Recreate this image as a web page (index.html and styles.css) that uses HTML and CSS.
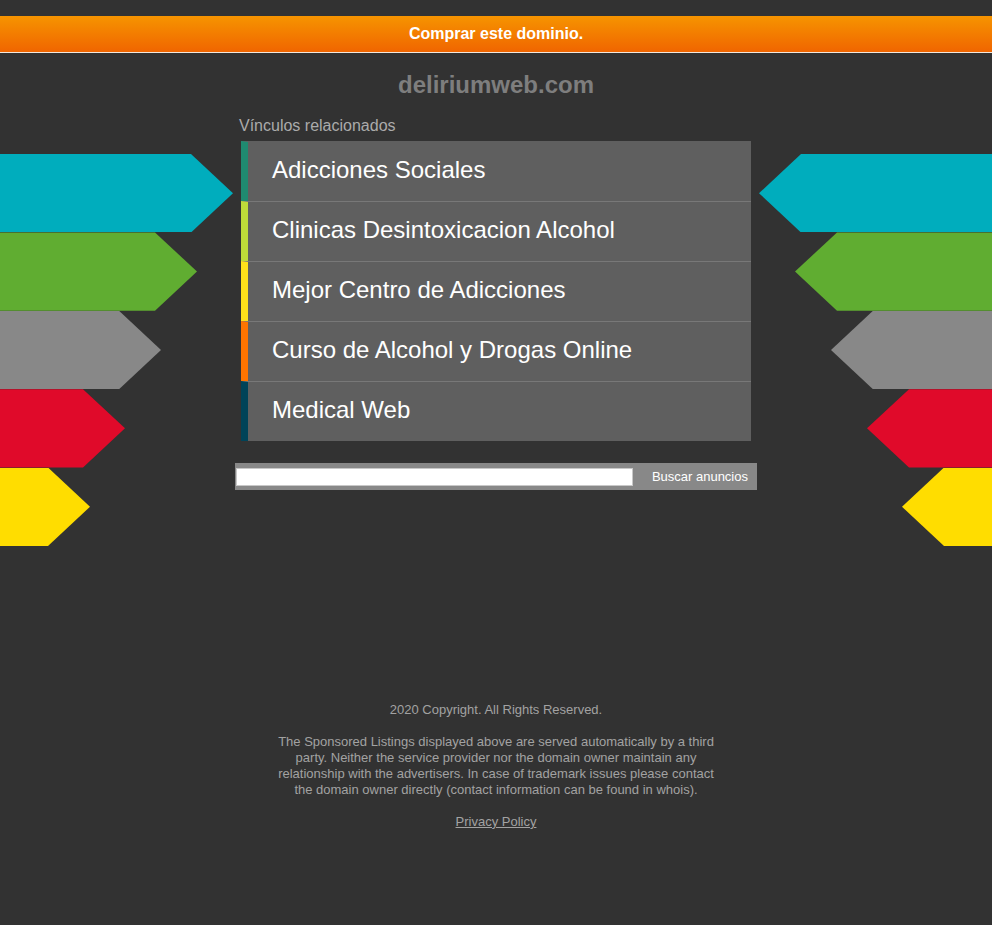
FILE: index.html
```html
<!DOCTYPE html>
<html lang="es">
<head>
<meta charset="utf-8">
<title>deliriumweb.com</title>
<link rel="stylesheet" href="styles.css">
</head>
<body>
<div class="buy-bar"><a href="#">Comprar este dominio.</a></div>
<h1 class="domain">deliriumweb.com</h1>
<main class="layout">
  <div class="arrows arrows-left">
    <div class="arrow arrow-l a1"></div>
    <div class="arrow arrow-l a2"></div>
    <div class="arrow arrow-l a3"></div>
    <div class="arrow arrow-l a4"></div>
    <div class="arrow arrow-l a5"></div>
  </div>
  <div class="center">
    <div class="related-title">Vínculos relacionados</div>
    <ul class="links">
      <li class="link c1"><a href="#">Adicciones Sociales</a></li>
      <li class="link c2"><a href="#">Clinicas Desintoxicacion Alcohol</a></li>
      <li class="link c3"><a href="#">Mejor Centro de Adicciones</a></li>
      <li class="link c4"><a href="#">Curso de Alcohol y Drogas Online</a></li>
      <li class="link c5"><a href="#">Medical Web</a></li>
    </ul>
    <form class="search">
      <input class="search-input" type="text">
      <button class="search-btn" type="button">Buscar anuncios</button>
    </form>
  </div>
  <div class="arrows arrows-right">
    <div class="arrow arrow-r a1"></div>
    <div class="arrow arrow-r a2"></div>
    <div class="arrow arrow-r a3"></div>
    <div class="arrow arrow-r a4"></div>
    <div class="arrow arrow-r a5"></div>
  </div>
</main>
<footer class="footer">
  <p class="copy">2020 Copyright. All Rights Reserved.</p>
  <p class="disclaimer">The Sponsored Listings displayed above are served automatically by a third party. Neither the service provider nor the domain owner maintain any relationship with the advertisers. In case of trademark issues please contact the domain owner directly (contact information can be found in whois).</p>
  <p class="privacy"><a href="#">Privacy Policy</a></p>
</footer>
</body>
</html>
```
FILE: styles.css
```css
* { box-sizing: border-box; }
html, body {
  margin: 0;
  padding: 0;
  background: #323232;
  font-family: "Liberation Sans", Arial, sans-serif;
}
body { min-height: 925px; }

.buy-bar {
  margin-top: 16px;
  height: 37px;
  background: linear-gradient(to bottom, #f69400, #f06500);
  border-bottom: 1px solid #f3e7dc;
  text-align: center;
}
.buy-bar a {
  display: block;
  line-height: 35px;
  color: #fff;
  font-weight: bold;
  font-size: 16px;
  text-decoration: none;
}

.domain {
  margin: 18px 0 0;
  height: 28px;
  line-height: 28px;
  text-align: center;
  font-size: 24px;
  font-weight: bold;
  color: #7e7e7e;
}

.layout {
  display: grid;
  grid-template-columns: 235px 522px 235px;
}

.arrows {
  padding-top: 55px;
  display: flex;
  flex-direction: column;
}
.arrow { height: 78.4px; }
.arrow-l {
  clip-path: polygon(0 0, calc(100% - 42px) 0, 100% 50%, calc(100% - 42px) 100%, 0 100%);
}
.arrow-r {
  align-self: flex-end;
  clip-path: polygon(42px 0, 100% 0, 100% 100%, 42px 100%, 0 50%);
}
.a1 { width: 233px; background: #00adbd; }
.a2 { width: 197px; background: #60ad31; }
.a3 { width: 161px; background: #888888; }
.a4 { width: 125px; background: #e00a2a; }
.a5 { width: 90px;  background: #ffdd00; }

.center { padding-top: 17px; }
.related-title {
  padding-left: 4px;
  font-size: 16px;
  line-height: 20px;
  color: #ababab;
}
.links {
  list-style: none;
  margin: 5px 0 0 6px;
  padding: 0;
  width: 510px;
}
.link {
  height: 60px;
  display: flex;
  align-items: center;
  padding-bottom: 3px;
  background: #5f5f5f;
  border-left: 7px solid #1f8a70;
  border-top: 1px solid #787878;
}
.link:first-child { border-top-color: #5f5f5f; }
.link a {
  padding-left: 24px;
  color: #fff;
  font-size: 24px;
  text-decoration: none;
}
.c1 { border-left-color: #1f8a70; }
.c2 { border-left-color: #bedb39; }
.c3 { border-left-color: #ffe11a; }
.c4 { border-left-color: #fd7400; }
.c5 { border-left-color: #004358; }

.search {
  margin: 22px 0 0;
  height: 27px;
  background: #888888;
  display: flex;
  align-items: flex-start;
  padding: 5px 0 0 1px;
}
.search-input {
  width: 397px;
  height: 18px;
  margin: 0;
  padding: 0;
  border: 1px solid #c8c8c8;
  background: #fff;
}
.search-btn {
  flex: 1;
  height: 18px;
  margin: 0;
  padding: 0 9px 0 0;
  border: 0;
  background: transparent;
  color: #fff;
  font-family: "Liberation Sans", Arial, sans-serif;
  font-size: 13px;
  line-height: 18px;
  text-align: right;
}

.footer {
  margin-top: 156px;
  text-align: center;
  color: #a2a2a2;
  font-size: 13px;
  line-height: 16px;
}
.footer p { margin: 0 auto 16px; }
.disclaimer { width: 442px; }
.privacy a { color: #a2a2a2; text-decoration: underline; }
```
